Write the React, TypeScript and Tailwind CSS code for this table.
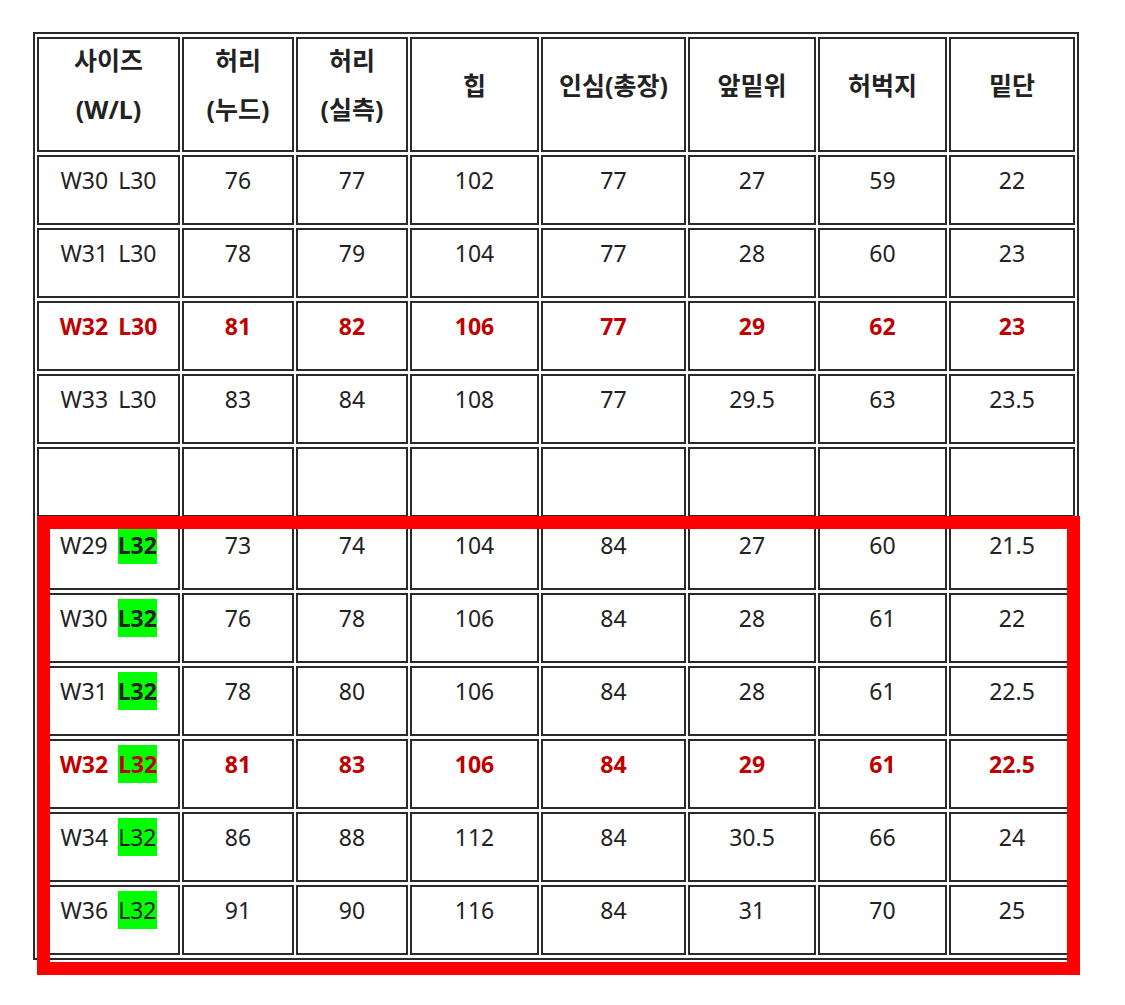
import React from 'react';

type Row = {
  w: string;
  l: string;
  red?: boolean;
  mark?: 'bold' | 'plain';
  values: string[];
} | null;

const headers: string[][] = [
  ['사이즈', '(W/L)'],
  ['허리', '(누드)'],
  ['허리', '(실측)'],
  ['힙'],
  ['인심(총장)'],
  ['앞밑위'],
  ['허벅지'],
  ['밑단'],
];

const widths = ['w-[143px]', 'w-[112px]', 'w-[112px]', 'w-[129px]', 'w-[145px]', 'w-[128px]', 'w-[129px]', 'w-[126px]'];

const rows: Row[] = [
  { w: 'W30', l: 'L30', values: ['76', '77', '102', '77', '27', '59', '22'] },
  { w: 'W31', l: 'L30', values: ['78', '79', '104', '77', '28', '60', '23'] },
  { w: 'W32', l: 'L30', red: true, values: ['81', '82', '106', '77', '29', '62', '23'] },
  { w: 'W33', l: 'L30', values: ['83', '84', '108', '77', '29.5', '63', '23.5'] },
  null,
  { w: 'W29', l: 'L32', mark: 'bold', values: ['73', '74', '104', '84', '27', '60', '21.5'] },
  { w: 'W30', l: 'L32', mark: 'bold', values: ['76', '78', '106', '84', '28', '61', '22'] },
  { w: 'W31', l: 'L32', mark: 'bold', values: ['78', '80', '106', '84', '28', '61', '22.5'] },
  { w: 'W32', l: 'L32', red: true, mark: 'bold', values: ['81', '83', '106', '84', '29', '61', '22.5'] },
  { w: 'W34', l: 'L32', mark: 'plain', values: ['86', '88', '112', '84', '30.5', '66', '24'] },
  { w: 'W36', l: 'L32', mark: 'plain', values: ['91', '90', '116', '84', '31', '70', '25'] },
];

const cell = 'border-2 border-[#2a2a2a] text-center align-middle p-0 pb-[20px]';

export default function App() {
  return (
    <div
      className="relative min-h-[1005px] bg-white pt-[32px] pl-[33px] text-[#222]"
      style={{ fontFamily: '"Noto Sans", "Noto Sans CJK KR", sans-serif' }}
    >
      <table className="table-fixed w-[1046px] border-separate [border-spacing:2px_3px] border-2 border-[#2a2a2a]">
        <thead>
          <tr>
            {headers.map((lines, i) => (
              <th key={i} className={`${cell} ${widths[i]} h-[115px] font-bold text-[25px]`}>
                {lines.map((t, j) => (
                  <div key={j} className={`leading-[34px] ${j > 0 ? 'mt-[15px]' : ''}`}>{t}</div>
                ))}
              </th>
            ))}
          </tr>
        </thead>
        <tbody>
          {rows.map((row, r) => {
            if (!row) {
              return (
                <tr key={r}>
                  {widths.map((_, i) => <td key={i} className={`${cell} h-[70px]`} />)}
                </tr>
              );
            }
            const tone = row.red ? 'text-[#c00000] font-bold' : '';
            return (
              <tr key={r} className="text-[23px] leading-[38px]">
                <td className={`${cell} h-[70px] ${tone}`}>
                  <span>{row.w}</span>
                  <span
                    className={`ml-[10px] inline-block h-[38px] ${
                      row.mark ? 'bg-[#00ff00]' : ''
                    } ${row.mark === 'bold' ? 'font-bold' : ''}`}
                  >
                    {row.l}
                  </span>
                </td>
                {row.values.map((v, i) => (
                  <td key={i} className={`${cell} h-[70px] ${tone}`}>{v}</td>
                ))}
              </tr>
            );
          })}
        </tbody>
      </table>

      {/* red highlight box over the L32 rows */}
      <div className="pointer-events-none absolute left-[37px] top-[516px] h-[459px] w-[1043px] border-[13px] border-[#ff0000]" />
    </div>
  );
}
